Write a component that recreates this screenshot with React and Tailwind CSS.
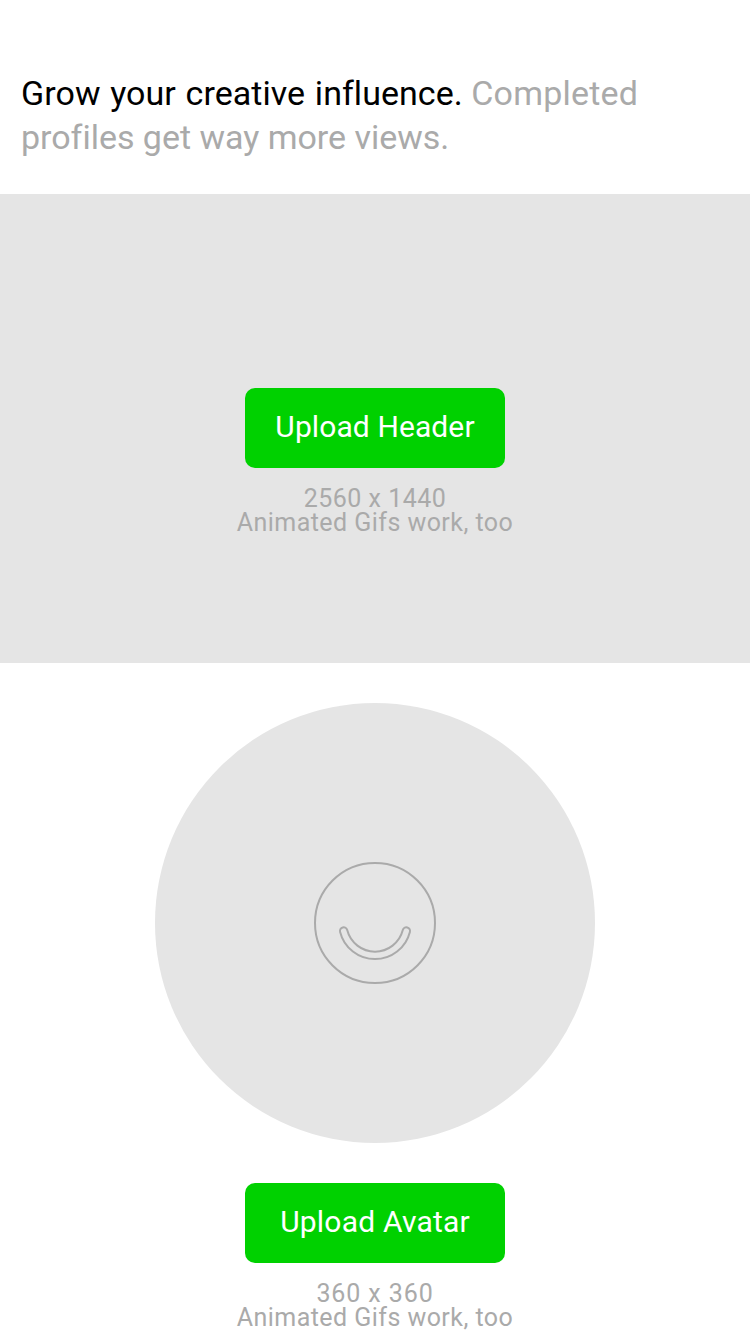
function SmileIcon() {
  return (
    <svg width="122" height="122" viewBox="0 0 122 122" fill="none" stroke="#aaaaaa" strokeWidth="2">
      <circle cx="61" cy="61" r="60" />
      <path d="M26.1 69.9A36 36 0 0 0 95.9 69.9A3.65 3.65 0 0 0 88.8 68.1A28.7 28.7 0 0 1 33.2 68.1A3.65 3.65 0 0 0 26.1 69.9Z" />
    </svg>
  );
}

function Upload({ label, labelClass, size, sizeClass }) {
  return (
    <div className="flex flex-col items-center">
      <button className={`h-20 w-[260px] rounded-[10px] bg-[#00d100] pb-1 text-[30px] whitespace-nowrap text-white ${labelClass}`}>
        {label}
      </button>
      <div className="mt-[19px] text-center text-[25px] leading-6 whitespace-nowrap text-[#aaaaaa]">
        <p className={sizeClass}>{size}</p>
        <p className="tracking-[0.45px]">Animated Gifs work, too</p>
      </div>
    </div>
  );
}

export default function App() {
  return (
    <main className="flex h-[1334px] w-[750px] flex-col overflow-hidden bg-white font-[Roboto,'Liberation_Sans',sans-serif]">
      <header className="h-[194px] pt-[71px] pl-[21px] text-[34px] leading-[44px] whitespace-nowrap text-[#aaaaaa]">
        <p>
          <span className="tracking-[0.05px] text-black [word-spacing:1.2px]">Grow your creative influence.</span>{' '}
          <span className="tracking-[0.2px]">Completed</span>
        </p>
        <p className="tracking-[-0.02px]">profiles get way more views.</p>
      </header>
      <section className="h-[469px] bg-[#e5e5e5] pt-[194px]">
        <Upload label="Upload Header" labelClass="tracking-[0.1px]" size="2560 x 1440" sizeClass="tracking-[0.5px]" />
      </section>
      <section className="flex flex-col items-center gap-10 pt-10">
        <div className="flex size-[440px] items-center justify-center rounded-full bg-[#e5e5e5]">
          <SmileIcon />
        </div>
        <Upload label="Upload Avatar" labelClass="tracking-[0.2px]" size="360 x 360" sizeClass="tracking-[0.9px]" />
      </section>
    </main>
  );
}
